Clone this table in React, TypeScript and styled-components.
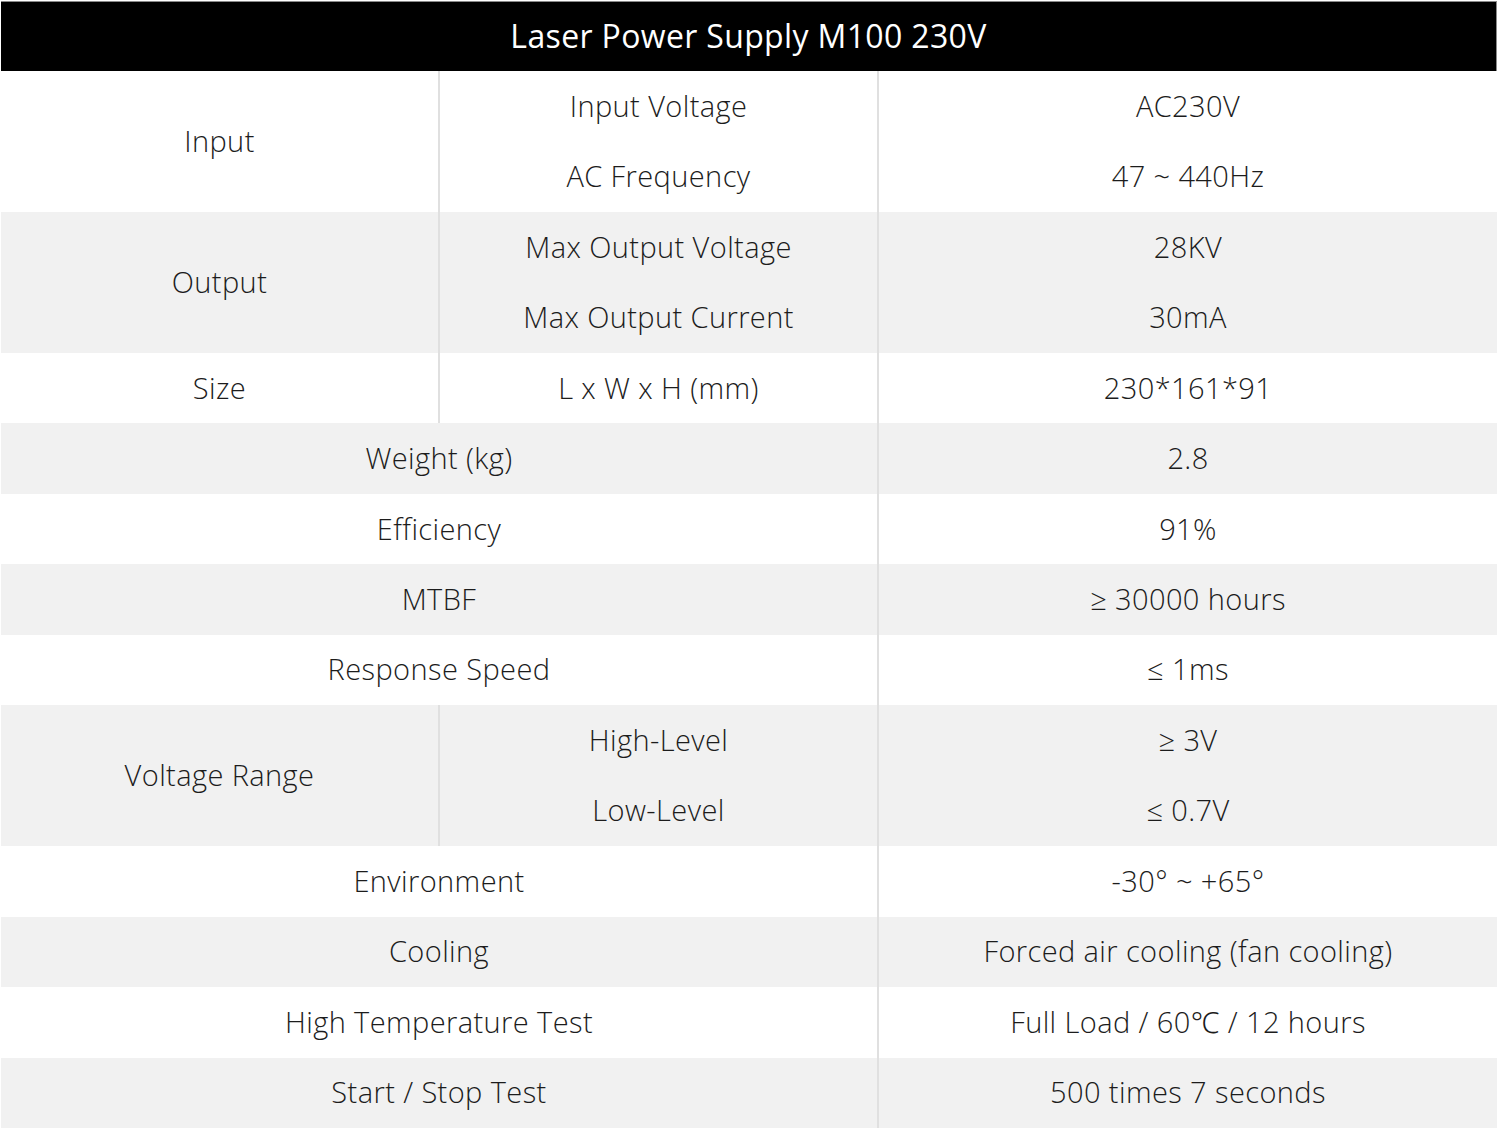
import React from "react";
import styled, { createGlobalStyle } from "styled-components";

const Global = createGlobalStyle`
  html, body { margin: 0; padding: 0; background: #ffffff; }
  body { font-family: "Open Sans", "Noto Sans", sans-serif; }
`;

const Frame = styled.div`
  width: 1500px;
  height: 1132px;
  box-sizing: border-box;
  padding: 1px 3px 3px 1px;
  background: #ffffff;
`;

const Header = styled.div`
  height: 70px;
  background: #000000;
  color: #ffffff;
  border-top: 1px solid #8a8a8a;
  border-right: 1px solid #8a8a8a;
  box-sizing: border-box;
  display: flex;
  align-items: center;
  justify-content: center;
  padding-bottom: 3px;
  font-family: "Open Sans", "Noto Sans", sans-serif;
  font-size: 32px;
  font-weight: 400;
  letter-spacing: 0.35px;
`;

const Grid = styled.div`
  display: grid;
  grid-template-columns: 439px 439px 1fr;
  grid-template-rows: repeat(15, 70.47px);
`;

const Cell = styled.div<{ $grey?: boolean; $rows?: number; $cols?: number; $divider?: boolean }>`
  grid-row: span ${(p) => p.$rows ?? 1};
  grid-column: span ${(p) => p.$cols ?? 1};
  background: ${(p) => (p.$grey ? "#f1f1f1" : "#ffffff")};
  border-right: ${(p) => (p.$divider ? "2px solid #e0e0e0" : "none")};
  box-sizing: border-box;
  display: flex;
  align-items: center;
  justify-content: center;
  padding-bottom: 2px;
  color: #1c1c1c;
  font-family: "Open Sans", "Noto Sans", sans-serif;
  font-weight: 300;
  font-size: 29px;
  letter-spacing: 0.4px;
  white-space: nowrap;
`;

type Row =
  | { kind: "group"; label: string; subs: [string, string][]; grey: boolean }
  | { kind: "split"; label: string; sub: string; value: string; grey: boolean }
  | { kind: "wide"; label: string; value: string; grey: boolean };

const rows: Row[] = [
  { kind: "group", label: "Input", subs: [["Input Voltage", "AC230V"], ["AC Frequency", "47 ~ 440Hz"]], grey: false },
  { kind: "group", label: "Output", subs: [["Max Output Voltage", "28KV"], ["Max Output Current", "30mA"]], grey: true },
  { kind: "split", label: "Size", sub: "L x W x H (mm)", value: "230*161*91", grey: false },
  { kind: "wide", label: "Weight (kg)", value: "2.8", grey: true },
  { kind: "wide", label: "Efficiency", value: "91%", grey: false },
  { kind: "wide", label: "MTBF", value: "≥ 30000 hours", grey: true },
  { kind: "wide", label: "Response Speed", value: "≤ 1ms", grey: false },
  { kind: "group", label: "Voltage Range", subs: [["High-Level", "≥ 3V"], ["Low-Level", "≤ 0.7V"]], grey: true },
  { kind: "wide", label: "Environment", value: "-30° ~ +65°", grey: false },
  { kind: "wide", label: "Cooling", value: "Forced air cooling (fan cooling)", grey: true },
  { kind: "wide", label: "High Temperature Test", value: "Full Load / 60℃ / 12 hours", grey: false },
  { kind: "wide", label: "Start / Stop Test", value: "500 times 7 seconds", grey: true },
];

export default function App() {
  return (
    <>
      <Global />
      <Frame>
        <Header>Laser Power Supply M100 230V</Header>
        <Grid>
          {rows.map((r, i) => {
            if (r.kind === "group") {
              return (
                <React.Fragment key={i}>
                  <Cell $grey={r.grey} $rows={2} $divider>{r.label}</Cell>
                  <Cell $grey={r.grey} $divider>{r.subs[0][0]}</Cell>
                  <Cell $grey={r.grey}>{r.subs[0][1]}</Cell>
                  <Cell $grey={r.grey} $divider>{r.subs[1][0]}</Cell>
                  <Cell $grey={r.grey}>{r.subs[1][1]}</Cell>
                </React.Fragment>
              );
            }
            if (r.kind === "split") {
              return (
                <React.Fragment key={i}>
                  <Cell $grey={r.grey} $divider>{r.label}</Cell>
                  <Cell $grey={r.grey} $divider>{r.sub}</Cell>
                  <Cell $grey={r.grey}>{r.value}</Cell>
                </React.Fragment>
              );
            }
            return (
              <React.Fragment key={i}>
                <Cell $grey={r.grey} $cols={2} $divider>{r.label}</Cell>
                <Cell $grey={r.grey}>{r.value}</Cell>
              </React.Fragment>
            );
          })}
        </Grid>
      </Frame>
    </>
  );
}
